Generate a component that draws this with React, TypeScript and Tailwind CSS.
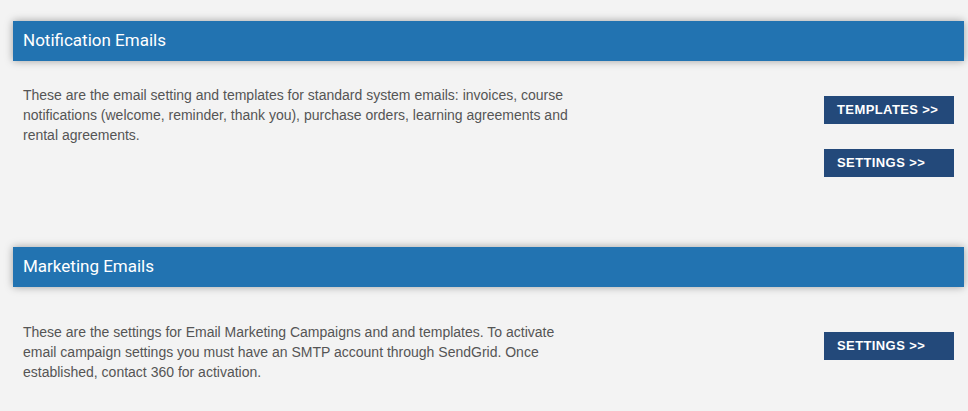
const sections = [
  {
    title: 'Notification Emails',
    text: 'These are the email setting and templates for standard system emails: invoices, course notifications (welcome, reminder, thank you), purchase orders, learning agreements and rental agreements.',
    buttons: ['TEMPLATES >>', 'SETTINGS >>'],
    textTop: 'mt-[24px]',
    btnTop: 'mt-[35px]',
    bottom: 'pb-[70px]',
  },
  {
    title: 'Marketing Emails',
    text: 'These are the settings for Email Marketing Campaigns and and templates. To activate email campaign settings you must have an SMTP account through SendGrid. Once established, contact 360 for activation.',
    buttons: ['SETTINGS >>'],
    textTop: 'mt-[35px]',
    btnTop: 'mt-[45px]',
    bottom: 'pb-[30px]',
  },
];

export default function App() {
  return (
    <div className="min-h-screen bg-[#f3f3f3] pl-[13px] pr-[4px] pt-[21px]">
      {sections.map((section) => (
        <section
          key={section.title}
          className={section.bottom}
        >
          <div className="flex h-[40px] items-center bg-[#2273b1] pl-[10px] shadow-[0_0_8px_rgba(0,0,0,0.35)]">
            <h2 className="font-['Roboto',sans-serif] text-[17px] font-normal text-white">
              {section.title}
            </h2>
          </div>

          <div className="flex items-start justify-between pl-[10px] pr-[10px]">
            <p className={`${section.textTop} w-[565px] font-['Liberation_Sans',Arial,sans-serif] text-[14px] leading-[20px] text-[#555555]`}>
              {section.text}
            </p>

            <div className={`${section.btnTop} flex flex-col gap-[25px]`}>
              {section.buttons.map((label) => (
                <button
                  key={label}
                  type="button"
                  className="h-[28px] w-[130px] bg-[#23497a] pl-[13px] text-left font-['Liberation_Sans',Arial,sans-serif] text-[13px] font-bold tracking-[0.4px] text-white"
                >
                  {label}
                </button>
              ))}
            </div>
          </div>
        </section>
      ))}
    </div>
  );
}
